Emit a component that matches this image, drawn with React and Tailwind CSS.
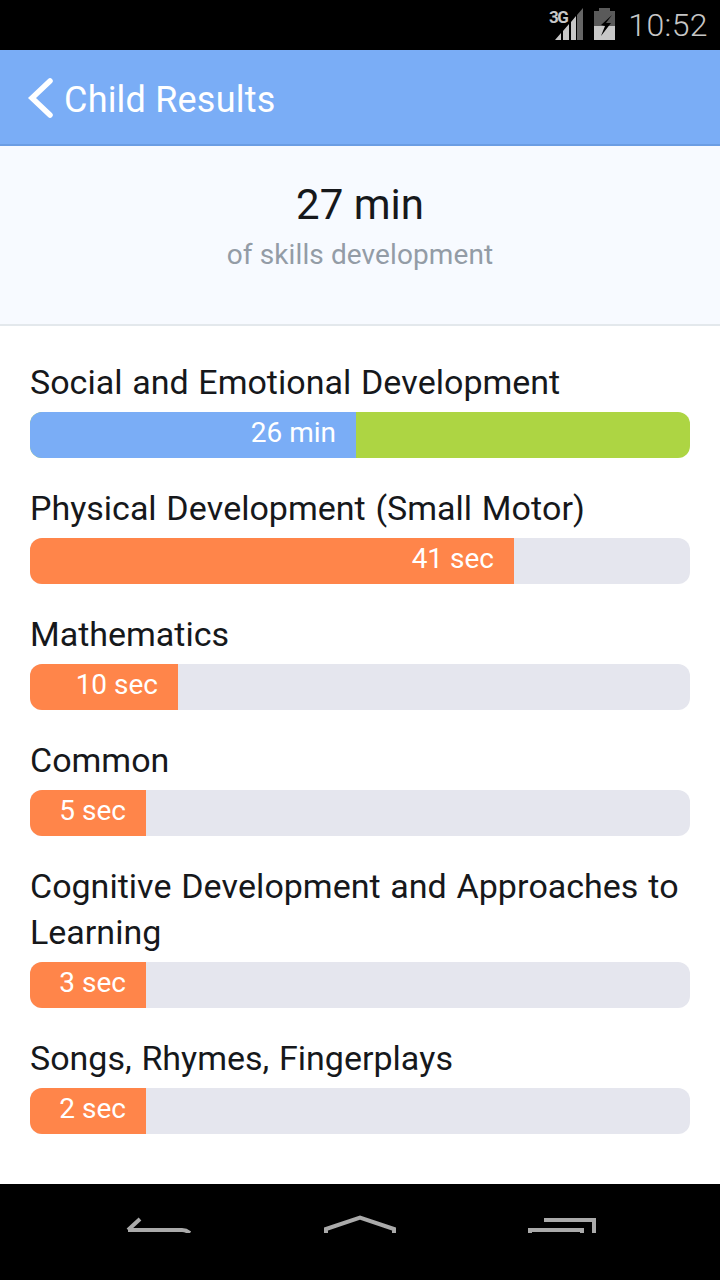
const rows = [
  { label: "Social and Emotional Development", value: "26 min", width: 326, color: "bg-[#7aadf6]", track: "bg-[#add543]" },
  { label: "Physical Development (Small Motor)", value: "41 sec", width: 484, color: "bg-[#ff854a]", track: "bg-[#e5e6ee]" },
  { label: "Mathematics", value: "10 sec", width: 148, color: "bg-[#ff854a]", track: "bg-[#e5e6ee]" },
  { label: "Common", value: "5 sec", width: 116, color: "bg-[#ff854a]", track: "bg-[#e5e6ee]" },
  { label: "Cognitive Development and Approaches to Learning", value: "3 sec", width: 116, color: "bg-[#ff854a]", track: "bg-[#e5e6ee]" },
  { label: "Songs, Rhymes, Fingerplays", value: "2 sec", width: 116, color: "bg-[#ff854a]", track: "bg-[#e5e6ee]" },
];

function StatusBar() {
  return (
    <div className="h-[50px] bg-black flex items-center justify-end pr-[12px] shrink-0">
      <svg width="36" height="32" viewBox="0 0 36 32" className="mr-[11px] mt-[-2px]">
        <text x="2" y="15" fontFamily="Roboto, sans-serif" fontWeight="700" fontSize="17" fill="#c8c8c8" letterSpacing="-1.6">3G</text>
        <path d="M8 32 L14 25 V32 Z M16 23 L22 16 V32 H16 Z M24 14 L29 8 V32 H24 Z" fill="#c8c8c8" />
        <path d="M30 7 L36 0 V32 H30 Z" fill="#666" />
      </svg>
      <svg width="21" height="32" viewBox="0 0 21 32" className="mr-[13px] mt-[-2px]">
        <path d="M5 0 H16 V3 H21 V32 H0 V3 H5 Z" fill="#5a5a5a" />
        <path d="M0 18 H21 V32 H0 Z" fill="#c8c8c8" />
        <path d="M18 7 L7 17 L11 18 L7 28 L17 15 L12 15 Z" fill="#000" />
      </svg>
      <span className="text-[32px] leading-none text-[#c6c6c6] font-['Roboto',sans-serif] font-light tracking-[0.4px]">10:52</span>
    </div>
  );
}

function Row({ row }) {
  return (
    <div className="mb-[27px]">
      <div className="text-[34px] leading-[46px] text-[#16181b] mb-[7px] [font-kerning:none] [word-spacing:1.3px]">{row.label}</div>
      <div className={`h-[46px] rounded-[12px] overflow-hidden flex ${row.track}`}>
        <div
          className={`h-full flex items-center justify-end pr-[20px] text-white text-[28px] leading-none pb-[4px] [font-kerning:none] ${row.color}`}
          style={{ width: row.width }}
        >
          {row.value}
        </div>
      </div>
    </div>
  );
}

export default function App() {
  return (
    <div className="w-[720px] h-[1280px] flex flex-col bg-white overflow-hidden font-['Roboto',sans-serif]">
      <StatusBar />
      <div className="h-[96px] shrink-0 bg-[#7aadf6] border-b-2 border-[#6b9de3] flex items-center pl-[27px] pt-[6px] text-white">
        <svg width="26" height="40" viewBox="0 0 26 40" className="mr-[11px] mt-[-4px]">
          <path d="M23 3 L5 20 L23 37" fill="none" stroke="#fff" strokeWidth="5.5" strokeLinecap="round" strokeLinejoin="miter" />
        </svg>
        <span className="text-[36px] leading-none tracking-[0.2px]">Child Results</span>
      </div>
      <div className="h-[180px] shrink-0 bg-[#f7faff] border-b-2 border-[#e3e8ec] flex flex-col items-center pt-[33px]">
        <div className="text-[42px] leading-[52px] text-[#16181b]">27 min</div>
        <div className="text-[28px] leading-[40px] text-[#939ca6] mt-[4px] tracking-[0.1px]">of skills development</div>
      </div>
      <div className="flex-1 px-[30px] pt-[33px]">
        {rows.map((r) => (
          <Row key={r.label} row={r} />
        ))}
      </div>
      <div className="h-[96px] shrink-0 bg-black flex items-start justify-between pl-[126px] pr-[124px] pt-[14px]">
        <svg width="66" height="35" viewBox="0 0 66 35">
          <path d="M2 32 H56 Q60 32 64 35 M2 32 L14 21" fill="none" stroke="#aaa" strokeWidth="4" />
        </svg>
        <svg width="72" height="35" viewBox="0 0 72 35">
          <path d="M2 35 V31 L36 19.5 L70 31 V35" fill="none" stroke="#aaa" strokeWidth="4" />
        </svg>
        <svg width="68" height="35" viewBox="0 0 68 35">
          <path d="M2 35 V32 H54 V35 M16 22 H66 V35" fill="none" stroke="#aaa" strokeWidth="4" />
        </svg>
      </div>
    </div>
  );
}
